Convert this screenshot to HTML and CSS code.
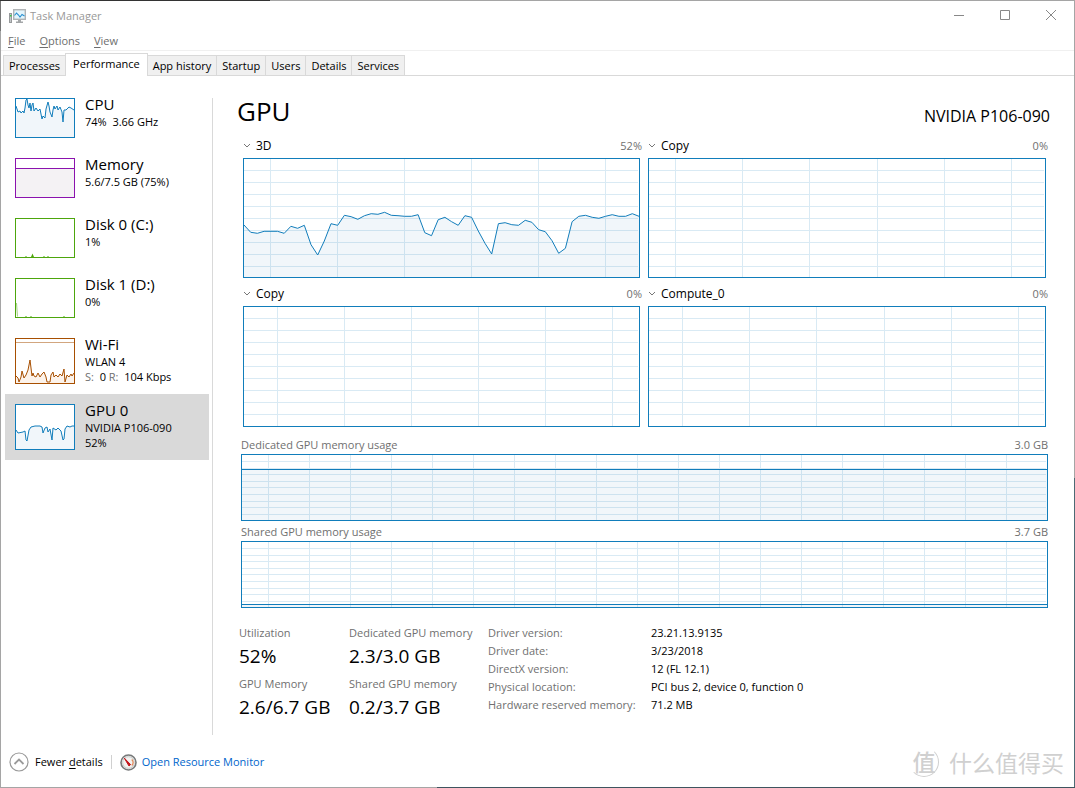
FILE: index.html
```html
<!DOCTYPE html>
<html lang="en">
<head>
<meta charset="utf-8">
<title>Task Manager</title>
<link rel="stylesheet" href="styles.css">
</head>
<body>
<div class="window">
  <header class="titlebar">
    <svg class="app-icon" width="17" height="15" viewBox="0 0 17 15" aria-hidden="true">
      <rect x="4.700" y="0.700" width="11.600" height="9.600" fill="#e3f5fc" stroke="#b0b3b5" stroke-width="1.400"/>
      <path d="M9 11h3v1.500h2V14H7v-1.500h2z" fill="#a4a7a9"/>
      <path d="M5.500 6.500l2-2.500 2 2 1.500 2 2-2.500 2.500 1.500" fill="none" stroke="#2a90d0" stroke-width="1.100"/>
      <rect x="0.500" y="4.500" width="2" height="9" fill="#c5c8ca" stroke="#96999b"/>
      <rect x="1" y="6" width="1.500" height="1.500" fill="#35c845"/>
    </svg>
    <span class="title">Task Manager</span>
    <div class="window-buttons">
      <button type="button" aria-label="Minimize"><svg width="12" height="12" viewBox="0 0 12 12"><path d="M1 5.500h10"/></svg></button>
      <button type="button" aria-label="Maximize"><svg width="12" height="12" viewBox="0 0 12 12"><path d="M1.500 0.500h9v9h-9z"/></svg></button>
      <button type="button" aria-label="Close"><svg width="12" height="12" viewBox="0 0 12 12"><path d="M1 0l10 10M11 0L1 10"/></svg></button>
    </div>
  </header>

  <nav class="menubar">
    <button type="button"><u>F</u>ile</button>
    <button type="button"><u>O</u>ptions</button>
    <button type="button"><u>V</u>iew</button>
  </nav>

  <div class="tabs" role="tablist">
    <button type="button" role="tab" class="tab">Processes</button>
    <button type="button" role="tab" class="tab active" aria-selected="true">Performance</button>
    <button type="button" role="tab" class="tab">App history</button>
    <button type="button" role="tab" class="tab">Startup</button>
    <button type="button" role="tab" class="tab">Users</button>
    <button type="button" role="tab" class="tab">Details</button>
    <button type="button" role="tab" class="tab">Services</button>
  </div>

  <div class="content">
    <aside class="sidebar">
      <button type="button" class="resource">
        <svg class="thumb blue" viewBox="0 0 58 38" preserveAspectRatio="none">
          <path class="area" d="M0 7L2 13 4 12 5 14 7 12 8 14 9 9 10 1 11 0 12 6 13 9 14 4 15 12 16 6 17 4 18 12 20 9 22 12 24 10 26 20 27 17 29 19 30 10 32 3 33 7 34 13 36 18 37 11 38 7 39 10 41 7 42 11 44 8 46 13 47 23 48 11 50 11 53 8 55 9 58 11V38H0z"/>
          <path class="line" d="M0 7L2 13 4 12 5 14 7 12 8 14 9 9 10 1 11 0 12 6 13 9 14 4 15 12 16 6 17 4 18 12 20 9 22 12 24 10 26 20 27 17 29 19 30 10 32 3 33 7 34 13 36 18 37 11 38 7 39 10 41 7 42 11 44 8 46 13 47 23 48 11 50 11 53 8 55 9 58 11"/>
        </svg>
        <span class="info"><span class="name">CPU</span><span>74%&nbsp; 3.66 GHz</span></span>
      </button>
      <button type="button" class="resource">
        <svg class="thumb purple" viewBox="0 0 58 38" preserveAspectRatio="none">
          <path class="area" d="M0 9H58V38H0z"/>
          <path class="line crisp" d="M0 9.500H58"/>
        </svg>
        <span class="info"><span class="name">Memory</span><span>5.6/7.5 GB (75%)</span></span>
      </button>
      <button type="button" class="resource">
        <svg class="thumb green" viewBox="0 0 58 38" preserveAspectRatio="none">
          <path class="area" d="M9 38l1-1 1 1zM15 38l1.500-3.500 1.500 3.500zM27 38l1-1 1 1zM31 38l1-1 1 1z"/>
        </svg>
        <span class="info"><span class="name">Disk 0 (C:)</span><span>1%</span></span>
      </button>
      <button type="button" class="resource">
        <svg class="thumb green" viewBox="0 0 58 38" preserveAspectRatio="none">
          <path class="trace" d="M0.500 24L1.500 37.500"/>
          <path class="area" d="M9 38l1-1 1 1zM14 38l1-1 1 1zM47 38l1-1 1 1z"/>
        </svg>
        <span class="info"><span class="name">Disk 1 (D:)</span><span>0%</span></span>
      </button>
      <button type="button" class="resource tall">
        <svg class="thumb brown" viewBox="0 0 58 44" preserveAspectRatio="none">
          <path class="area" d="M0 37L2 39 3 43 5 38 6 32 8 39 10 36 12 31 14 21 16 37 17 34 18 37 20 38 22 34 24 38 26 35 28 33 30 38 31 43 34 43 35 36 37 33 38 38 40 36 42 38 44 35 46 37 48 30 49 43 51 36 53 38 55 35 56 37 58 34V44H0z"/>
          <path class="line" d="M0 37L2 39 3 43 5 38 6 32 8 39 10 36 12 31 14 21 16 37 17 34 18 37 20 38 22 34 24 38 26 35 28 33 30 38 31 43 34 43 35 36 37 33 38 38 40 36 42 38 44 35 46 37 48 30 49 43 51 36 53 38 55 35 56 37 58 34"/>
          <path class="line faint" d="M0 3.500H58"/>
        </svg>
        <span class="info"><span class="name">Wi-Fi</span><span>WLAN 4</span><span><span class="muted">S:</span>&nbsp; 0 <span class="muted">R:</span>&nbsp; 104 Kbps</span></span>
      </button>
      <button type="button" class="resource tall selected">
        <svg class="thumb blue" viewBox="0 0 58 44" preserveAspectRatio="none">
          <path class="area" d="M0 25L2 28 7 27 9 26 10 35 11 36 13 25 15 22 19 21 24 21 26 22 27 28 29 23 31 22 32 27 34 24 36 35 37 23 40 25 42 23 45 26 47 35 48 34 49 24 51 21 54 22 56 21 58 21V44H0z"/>
          <path class="line" d="M0 25L2 28 7 27 9 26 10 35 11 36 13 25 15 22 19 21 24 21 26 22 27 28 29 23 31 22 32 27 34 24 36 35 37 23 40 25 42 23 45 26 47 35 48 34 49 24 51 21 54 22 56 21 58 21"/>
        </svg>
        <span class="info"><span class="name">GPU 0</span><span>NVIDIA P106-090</span><span>52%</span></span>
      </button>
    </aside>

    <main class="detail">
      <div class="heading">
        <h1>GPU</h1>
        <span class="model">NVIDIA P106-090</span>
      </div>

      <div class="engines">
        <section class="engine">
          <div class="engine-head">
            <button type="button"><svg class="chevron" width="8" height="6" viewBox="0 0 8 6"><path d="M1 1l3 3 3-3"/></svg>3D</button>
            <span class="muted">52%</span>
          </div>
          <svg class="chart" viewBox="0 0 395 118" preserveAspectRatio="none">
            <path class="area" d="M0 66L6.700 73.300 13.400 74.300 20.100 72.300 33.500 72.300 40.200 74.300 46.900 67.300 53.600 69.300 60.300 66.300 67 85.700 73.700 96 80.300 82 87 64.700 93.700 66.300 100.400 56.300 107.100 57.700 113.800 60.300 120.500 56.700 127.200 54.700 133.900 55.300 140.600 53.300 147.300 56.300 154 56.700 160.700 57.300 167.400 57.300 174.100 55.700 180.800 73.700 187.500 76.700 194.200 60.700 200.900 58.300 207.600 62.700 214.200 66.300 220.900 56.700 227.600 58.300 234.300 72 241 84.300 247.700 95 254.400 64.700 261.100 63.700 267.800 65.700 274.500 66.300 281.200 61.300 287.900 63.300 294.600 70.700 301.300 72.700 308 81.700 314.700 94.300 321.400 89.300 328.100 62.700 334.800 57.300 341.500 56.300 348.200 58.300 354.900 59.300 361.500 57.300 368.200 55.700 374.900 57.300 381.600 57.300 388.300 54.700 395 57.300V118H0z"/>
            <path class="grid" d="M0 11.500H394M0 23.500H394M0 35.500H394M0 47.500H394M0 59.500H394M0 71.500H394M0 83.500H394M0 95.500H394M0 107.500H394M26.500 0V118M93.500 0V118M160.500 0V118M227.500 0V118M294.500 0V118M361.500 0V118"/>
            <path class="line" d="M0 66L6.700 73.300 13.400 74.300 20.100 72.300 33.500 72.300 40.200 74.300 46.900 67.300 53.600 69.300 60.300 66.300 67 85.700 73.700 96 80.300 82 87 64.700 93.700 66.300 100.400 56.300 107.100 57.700 113.800 60.300 120.500 56.700 127.200 54.700 133.900 55.300 140.600 53.300 147.300 56.300 154 56.700 160.700 57.300 167.400 57.300 174.100 55.700 180.800 73.700 187.500 76.700 194.200 60.700 200.900 58.300 207.600 62.700 214.200 66.300 220.900 56.700 227.600 58.300 234.300 72 241 84.300 247.700 95 254.400 64.700 261.100 63.700 267.800 65.700 274.500 66.300 281.200 61.300 287.900 63.300 294.600 70.700 301.300 72.700 308 81.700 314.700 94.300 321.400 89.300 328.100 62.700 334.800 57.300 341.500 56.300 348.200 58.300 354.900 59.300 361.500 57.300 368.200 55.700 374.900 57.300 381.600 57.300 388.300 54.700 395 57.300"/>
          </svg>
        </section>
        <section class="engine">
          <div class="engine-head">
            <button type="button"><svg class="chevron" width="8" height="6" viewBox="0 0 8 6"><path d="M1 1l3 3 3-3"/></svg>Copy</button>
            <span class="muted">0%</span>
          </div>
          <svg class="chart" viewBox="0 0 396 118" preserveAspectRatio="none">
            <path class="grid" d="M0 11.500H395M0 23.500H395M0 35.500H395M0 47.500H395M0 59.500H395M0 71.500H395M0 83.500H395M0 95.500H395M0 107.500H395M26.500 0V118M93.500 0V118M160.500 0V118M228.500 0V118M295.500 0V118M362.500 0V118"/>
          </svg>
        </section>
        <section class="engine">
          <div class="engine-head">
            <button type="button"><svg class="chevron" width="8" height="6" viewBox="0 0 8 6"><path d="M1 1l3 3 3-3"/></svg>Copy</button>
            <span class="muted">0%</span>
          </div>
          <svg class="chart lower" viewBox="0 0 395 119" preserveAspectRatio="none">
            <path class="grid" d="M0 11.500H394M0 23.500H394M0 35.500H394M0 47.500H394M0 59.500H394M0 71.500H394M0 83.500H394M0 95.500H394M0 107.500H394M33.500 0V119M100.500 0V119M167.500 0V119M234.500 0V119M301.500 0V119M368.500 0V119"/>
          </svg>
        </section>
        <section class="engine">
          <div class="engine-head">
            <button type="button"><svg class="chevron" width="8" height="6" viewBox="0 0 8 6"><path d="M1 1l3 3 3-3"/></svg>Compute_0</button>
            <span class="muted">0%</span>
          </div>
          <svg class="chart lower" viewBox="0 0 396 119" preserveAspectRatio="none">
            <path class="grid" d="M0 11.500H395M0 23.500H395M0 35.500H395M0 47.500H395M0 59.500H395M0 71.500H395M0 83.500H395M0 95.500H395M0 107.500H395M33.500 0V119M100.500 0V119M167.500 0V119M235.500 0V119M302.500 0V119M369.500 0V119"/>
          </svg>
        </section>
      </div>

      <section class="memory">
        <div class="memory-head muted"><span>Dedicated GPU memory usage</span><span>3.0 GB</span></div>
        <svg class="chart" viewBox="0 0 805 65" preserveAspectRatio="none">
          <path class="area" d="M0 14H805V65H0z"/>
          <path class="grid" d="M0 6.500H804M0 13.500H804M0 19.500H804M0 26.500H804M0 32.500H804M0 39.500H804M0 46.500H804M0 52.500H804M0 59.500H804M26.500 0V65M67.500 0V65M108.500 0V65M149.500 0V65M190.500 0V65M231.500 0V65M272.500 0V65M313.500 0V65M354.500 0V65M395.500 0V65M436.500 0V65M477.500 0V65M518.500 0V65M559.500 0V65M600.500 0V65M641.500 0V65M682.500 0V65M723.500 0V65M764.500 0V65"/>
          <path class="line crisp" d="M0 14.500H805"/>
        </svg>
        <div class="memory-head muted"><span>Shared GPU memory usage</span><span>3.7 GB</span></div>
        <svg class="chart" viewBox="0 0 805 65" preserveAspectRatio="none">
          <path class="area" d="M0 62H805V65H0z"/>
          <path class="grid" d="M0 6.500H804M0 13.500H804M0 19.500H804M0 26.500H804M0 32.500H804M0 39.500H804M0 46.500H804M0 52.500H804M0 59.500H804M26.500 0V65M67.500 0V65M108.500 0V65M149.500 0V65M190.500 0V65M231.500 0V65M272.500 0V65M313.500 0V65M354.500 0V65M395.500 0V65M436.500 0V65M477.500 0V65M518.500 0V65M559.500 0V65M600.500 0V65M641.500 0V65M682.500 0V65M723.500 0V65M764.500 0V65"/>
          <path class="line crisp" d="M0 62.500H805"/>
        </svg>
      </section>

      <div class="stats">
        <dl class="figures">
          <div><dt>Utilization</dt><dd>52%</dd></div>
          <div><dt>Dedicated GPU memory</dt><dd>2.3/3.0 GB</dd></div>
          <div><dt>GPU Memory</dt><dd>2.6/6.7 GB</dd></div>
          <div><dt>Shared GPU memory</dt><dd>0.2/3.7 GB</dd></div>
        </dl>
        <table class="driver">
          <tr><th scope="row">Driver version:</th><td>23.21.13.9135</td></tr>
          <tr><th scope="row">Driver date:</th><td>3/23/2018</td></tr>
          <tr><th scope="row">DirectX version:</th><td>12 (FL 12.1)</td></tr>
          <tr><th scope="row">Physical location:</th><td>PCI bus 2, device 0, function 0</td></tr>
          <tr><th scope="row">Hardware reserved memory:</th><td>71.2 MB</td></tr>
        </table>
      </div>
    </main>
  </div>

  <footer class="footer">
    <button type="button" class="fewer">
      <svg width="20" height="20" viewBox="0 0 20 20"><circle cx="10" cy="10" r="9" fill="#fff" stroke="#9a9a9a" stroke-width="1.200"/><path d="M5.500 12l4.500-4.500 4.500 4.500" fill="none" stroke="#9a9a9a" stroke-width="1.800"/></svg>
      <span>Fewer <u>d</u>etails</span>
    </button>
    <span class="divider"></span>
    <a class="monitor" href="#">
      <svg width="17" height="17" viewBox="0 0 17 17"><circle cx="8.500" cy="8.500" r="7.500" fill="#f3f3f1" stroke="#77797a" stroke-width="1.600"/><circle cx="8.500" cy="8.500" r="5.800" fill="none" stroke="#c9cbca"/><path d="M11.800 5.500a4.500 4.500 0 0 1 0 6" fill="none" stroke="#e58a5a" stroke-width="1.200"/><path d="M4.300 4.100L10.600 10.600 9 12z" fill="#c4161c" stroke="#c4161c"/></svg>
      <span>Open Resource Monitor</span>
    </a>
    <div class="watermark"><span class="seal">值</span><span>什么值得买</span></div>
  </footer>
</div>
</body>
</html>
```
FILE: styles.css
```css
* {
  box-sizing: border-box;
}

body {
  margin: 0;
  min-height: 100vh;
  display: flex;
  padding: 1px;
  background:
    linear-gradient(90deg, #333 270px, #a5a5a5 270px) top / 100% 1px no-repeat,
    linear-gradient(90deg, #a5a5a5 437px, #3f555f 437px) bottom / 100% 1px no-repeat,
    linear-gradient(#a5a5a5 478px, #4c6a74 478px) right / 1px 100% no-repeat,
    linear-gradient(#777 31px, #a5a5a5 31px) left / 1px 100% no-repeat,
    #fff;
  font: 11px/18px "Open Sans", "Noto Sans", sans-serif;
  color: #000;
}

button {
  margin: 0;
  padding: 0;
  border: 0;
  background: none;
  font: inherit;
  color: inherit;
  text-align: left;
}

svg {
  display: block;
  flex: none;
}

u {
  text-underline-offset: 2px;
}

.muted {
  color: #707070;
}

.window {
  flex: 1;
  min-width: 0;
  display: flex;
  flex-direction: column;
  background: #fff;
}

.titlebar {
  display: flex;
  align-items: center;
  height: 30px;
  padding-left: 8px;
}

.title {
  margin-left: 4px;
  color: #999;
}

.window-buttons {
  display: flex;
  margin-left: auto;
}

.window-buttons button {
  display: flex;
  justify-content: center;
  width: 46px;
}

.window-buttons path {
  fill: none;
  stroke: #888;
}

.menubar {
  display: flex;
  align-items: flex-end;
  gap: 14px;
  height: 20px;
  padding-left: 7px;
  border-bottom: 1px solid #f0f0f0;
  color: #6d6d6d;
}

.tabs {
  display: flex;
  align-items: flex-end;
  height: 25px;
  padding-left: 2px;
  border-bottom: 1px solid #d9d9d9;
}

.tab {
  height: 20px;
  margin-left: -1px;
  padding: 0 5px;
  border: 1px solid #d9d9d9;
  border-bottom: 0;
  background: #f0f0f0;
}

.tab:first-child {
  margin-left: 0;
}

.tab.active {
  height: 23px;
  margin-bottom: -1px;
  padding: 0 7px 2px;
  background: #fff;
}

.content {
  flex: 1;
  display: flex;
}

.sidebar {
  flex: none;
  width: 208px;
  padding: 12px 0 0 4px;
}

.resource {
  display: flex;
  gap: 10px;
  width: 100%;
  height: 60px;
  padding: 10px;
}

.resource.tall {
  height: 66px;
}

.resource.selected {
  background: #d9d9d9;
}

.thumb {
  width: 60px;
  height: 40px;
  border: 1px solid;
  background: #fff;
}

.tall .thumb {
  height: 46px;
}

.info {
  display: flex;
  flex-direction: column;
  line-height: 15px;
  white-space: nowrap;
}

.name {
  margin-top: -4px;
  font-size: 15px;
  line-height: 20px;
}

.blue,
.chart {
  color: #117dbb;
}

.purple {
  color: #8b12ae;
}

.green {
  color: #4da60c;
}

.brown {
  color: #a74f01;
}

.area {
  fill: #f1f6fa;
}

.purple .area {
  fill: #f4f2f4;
}

.green .area {
  fill: #4da60c;
}

.brown .area {
  fill: #fcf3eb;
}

.line,
.trace,
.grid {
  fill: none;
  stroke: currentColor;
  stroke-width: 1px;
  vector-effect: non-scaling-stroke;
}

.grid {
  stroke: rgba(17, 125, 187, 0.16);
}

.grid,
.crisp,
.faint {
  shape-rendering: crispEdges;
}

.faint,
.trace {
  opacity: 0.5;
}

.detail {
  flex: 1;
  min-width: 0;
  margin-top: 22px;
  padding: 0 26px 0 28px;
  border-left: 1px solid #d9d9d9;
  margin-left: 3px;
}

.heading {
  display: flex;
  align-items: center;
  justify-content: space-between;
  height: 32px;
  margin: 0 -2px 0 -4px;
}

.heading h1 {
  margin: 0;
  padding-bottom: 6px;
  font-size: 26px;
  font-weight: 400;
  line-height: 32px;
}

.model {
  padding-top: 4px;
  font-size: 16px;
}

.engines {
  display: grid;
  grid-template-columns: 401fr 402fr;
  column-gap: 4px;
  margin-bottom: 7px;
}

.engine-head {
  display: flex;
  align-items: center;
  justify-content: space-between;
  height: 28px;
  padding: 4px 0 0 2px;
}

.engine-head button {
  display: flex;
  align-items: center;
  gap: 5px;
  font-size: 12px;
}

.chevron path {
  fill: none;
  stroke: #777;
}

.chart {
  width: 100%;
  height: 67px;
  border: 1px solid;
}

.engine .chart {
  width: calc(100% - 4px);
  height: 120px;
  margin: 0 2px;
}

.engine .chart.lower {
  height: 121px;
}

.memory-head {
  display: flex;
  justify-content: space-between;
  height: 20px;
  padding-top: 2px;
}

.stats {
  display: flex;
  margin: 16px 0 0 -2px;
}

.figures {
  display: grid;
  grid-template-columns: 110px 139px;
  row-gap: 1px;
  margin: 0;
}

.figures dt,
.driver th {
  color: #707070;
  font-weight: 400;
  text-align: left;
}

.figures dt {
  white-space: nowrap;
}

.figures dd {
  margin: 0;
  padding-bottom: 4px;
  font-size: 19px;
  line-height: 28px;
}

.driver {
  align-self: flex-start;
  border-collapse: collapse;
}

.driver th,
.driver td {
  padding: 0;
}

.driver th {
  width: 163px;
}

.footer {
  display: flex;
  align-items: center;
  height: 52px;
  padding: 2px 10px 0 8px;
}

.fewer,
.monitor {
  display: flex;
  align-items: center;
  gap: 6px;
}

.monitor {
  gap: 5px;
  color: #0066cc;
  text-decoration: none;
}

.divider {
  width: 1px;
  height: 14px;
  margin: 0 8px;
  background: #d0d0d0;
}

.watermark {
  display: flex;
  align-items: center;
  gap: 10px;
  margin-left: auto;
  font: 23px/32px "Noto Sans CJK SC", sans-serif;
  color: #d0d0d0;
}

.seal {
  width: 30px;
  height: 30px;
  border: 1px solid;
  border-color: transparent #d0d0d0 #d0d0d0 transparent;
  border-radius: 50%;
  font-weight: 500;
  line-height: 26px;
  text-align: center;
}
```
